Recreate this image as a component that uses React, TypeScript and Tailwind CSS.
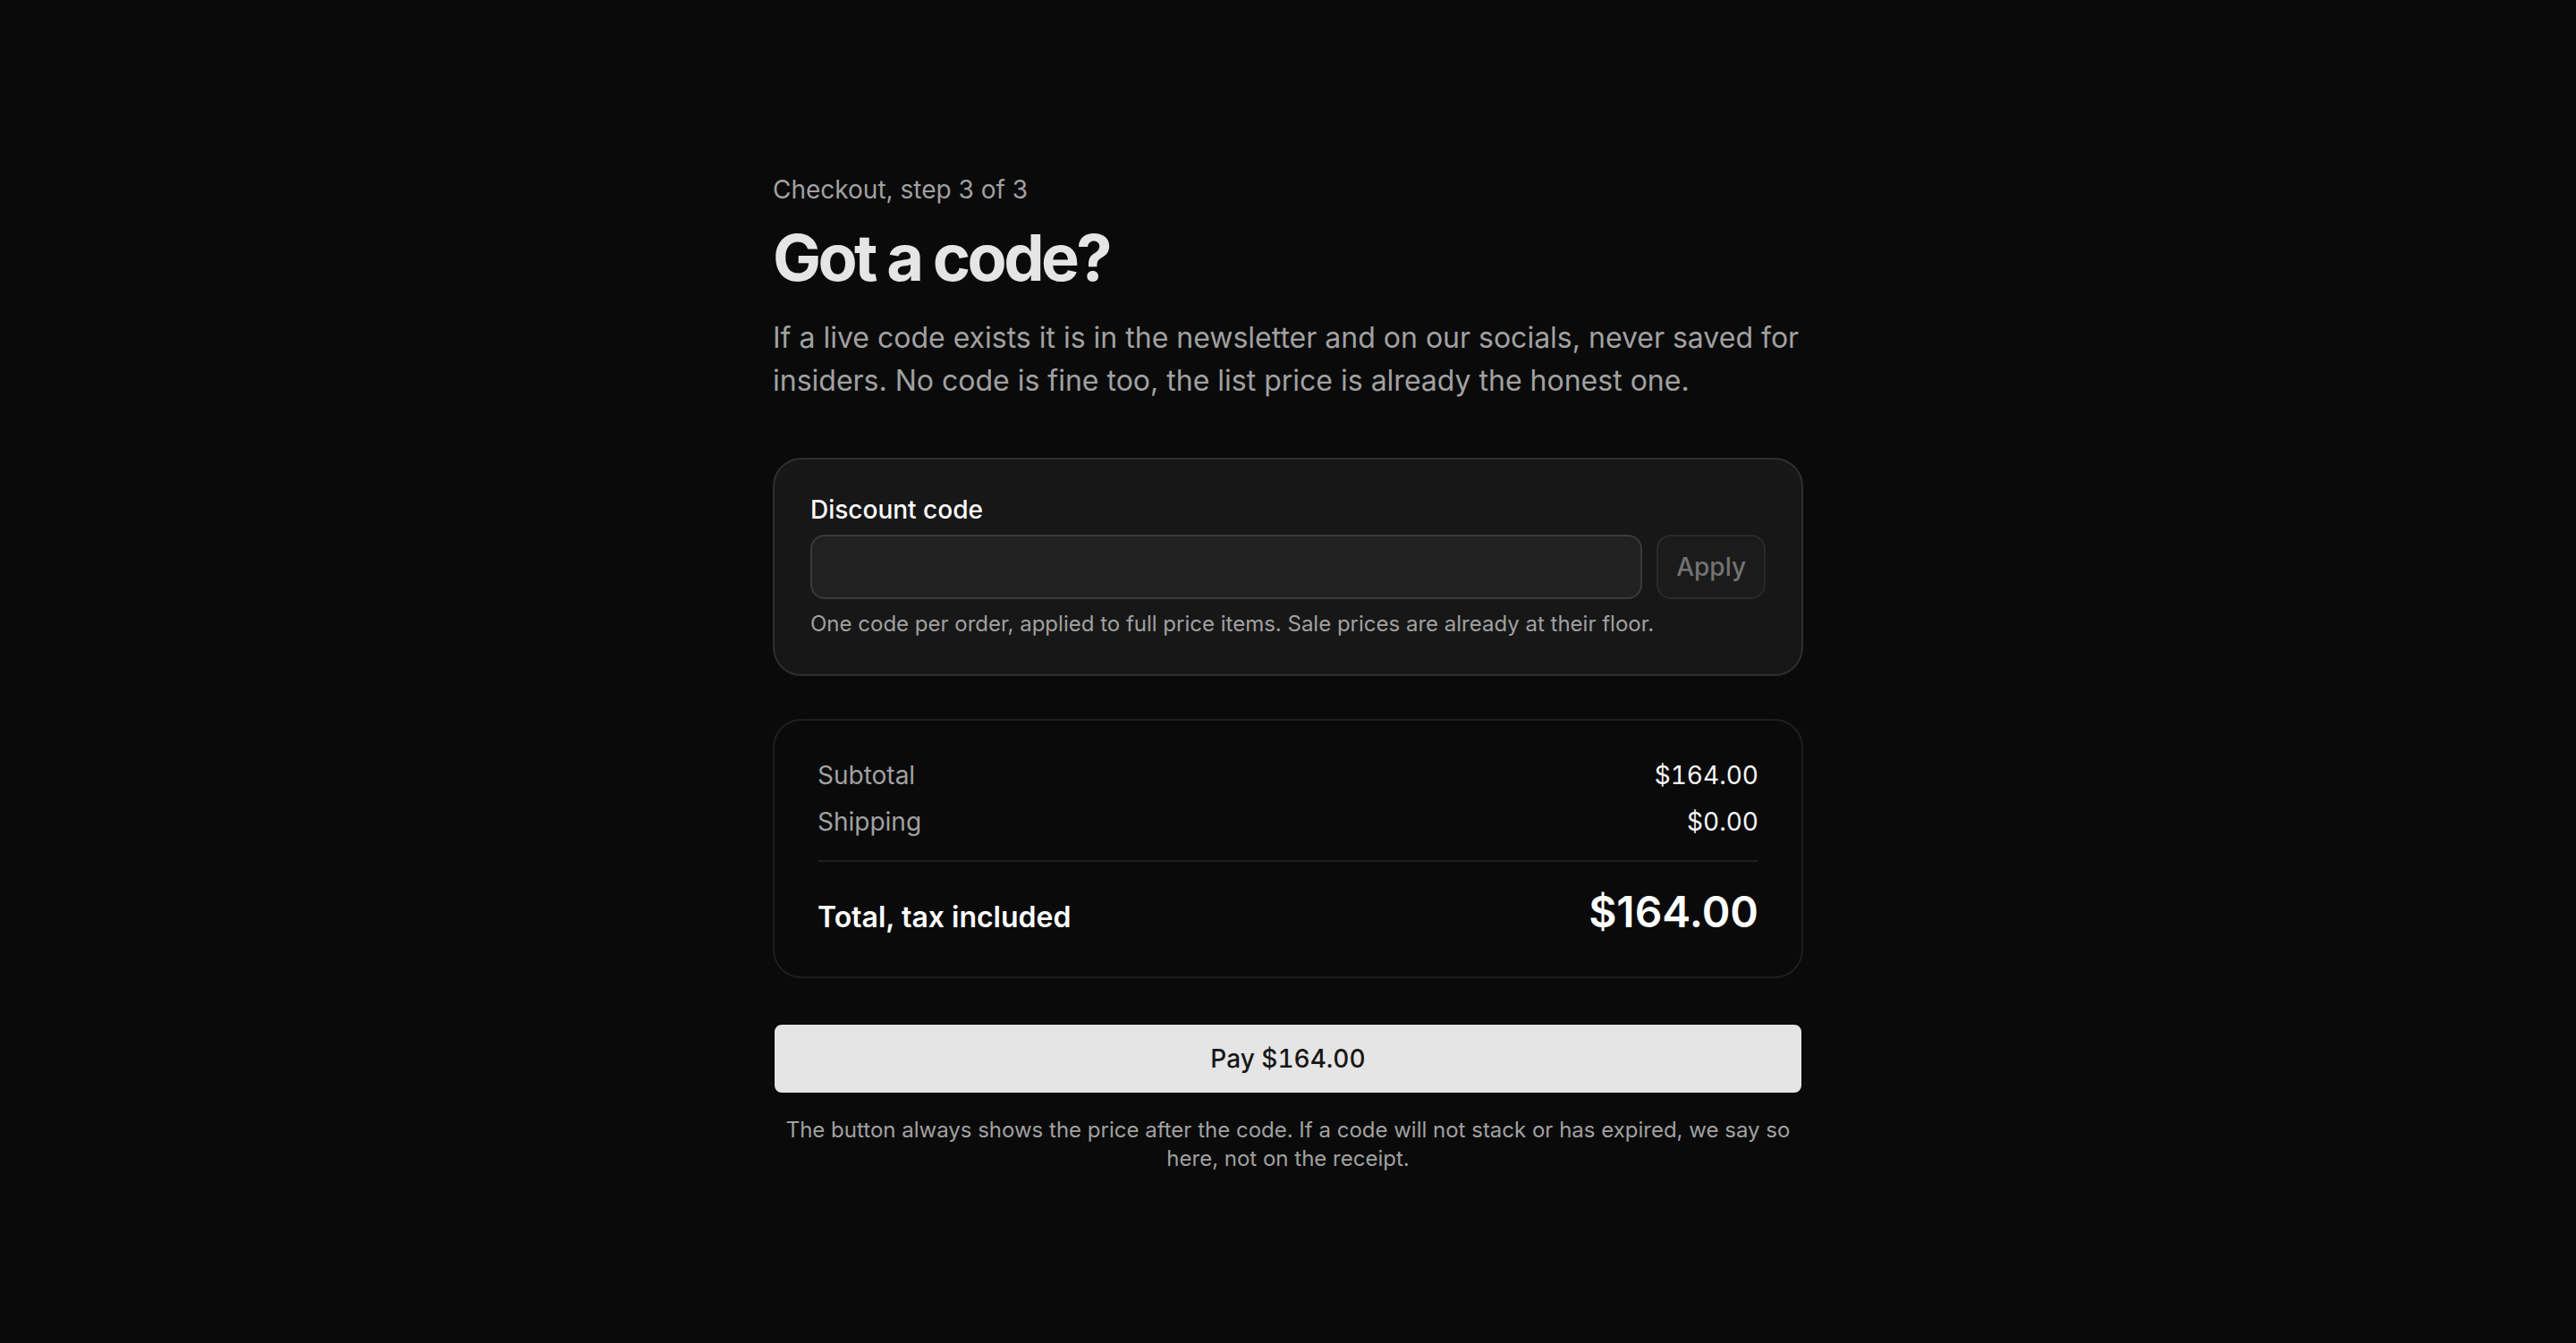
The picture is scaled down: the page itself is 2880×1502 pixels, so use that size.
import React, { useState } from 'react';

const App: React.FC = () => {
  const [code, setCode] = useState<string>('');
  const total = '$164.00';

  return (
    <div className="min-h-screen bg-[#0a0a0a] text-neutral-100 font-['Inter',sans-serif] antialiased">
      <div className="max-w-[1152px] mx-auto pt-[192px] pb-[128px]">
        <p className="text-[28px] leading-[40px] text-neutral-400">Checkout, step 3 of 3</p>
        <h1 className="mt-[16px] text-[72px] leading-[80px] font-bold tracking-[-0.05em] text-neutral-200">Got a code?</h1>
        <p className="mt-[26px] text-[32px] leading-[48px] text-neutral-400">
          If a live code exists it is in the newsletter and on our socials, never saved for insiders. No code is fine too, the list price is already the honest one.
        </p>

        <div className="mt-[62px] rounded-[32px] border-2 border-[#2e2e2e] bg-[#171717] p-[40px]">
          <label htmlFor="discount" className="block text-[28px] leading-[32px] font-medium text-white">Discount code</label>
          <div className="mt-[12px] flex gap-[16px]">
            <input
              id="discount"
              type="text"
              value={code}
              onChange={(e) => setCode(e.target.value)}
              className="h-[72px] flex-1 rounded-[16px] border-2 border-[#3a3a3a] bg-[#212121] px-[24px] text-[28px] text-neutral-100 outline-none"
            />
            <button className="h-[72px] rounded-[16px] border-2 border-[#2a2a2a] bg-[#1b1b1b] px-[20px] text-[28px] font-medium text-neutral-500">
              Apply
            </button>
          </div>
          <p className="mt-[12px] text-[24px] leading-[32px] text-neutral-400">
            One code per order, applied to full price items. Sale prices are already at their floor.
          </p>
        </div>

        <div className="mt-[48px] rounded-[32px] border-2 border-[#1e1e1e] px-[48px] pt-[41px] pb-[40px]">
          <div className="flex flex-col gap-[12px] text-[28px] leading-[40px]">
            <div className="flex justify-between">
              <span className="text-neutral-400">Subtotal</span>
              <span className="tabular-nums text-neutral-100">$164.00</span>
            </div>
            <div className="flex justify-between">
              <span className="text-neutral-400">Shipping</span>
              <span className="tabular-nums text-neutral-100">$0.00</span>
            </div>
          </div>
          <div className="mt-[23px] flex items-baseline justify-between border-t-2 border-[#1e1e1e] pt-[24px]">
            <span className="text-[32px] leading-[48px] font-semibold text-white">Total, tax included</span>
            <span className="text-[48px] leading-[64px] font-semibold text-white">{total}</span>
          </div>
        </div>

        <button className="mt-[50px] w-full rounded-[10px] border-2 border-[#0a0a0a] bg-neutral-200 py-[18px] text-[28px] leading-[40px] font-medium tabular-nums text-neutral-900">
          Pay {total}
        </button>
        <p className="mt-[24px] text-center text-[24px] leading-[32px] text-neutral-400">
          The button always shows the price after the code. If a code will not stack or has expired, we say so here, not on the receipt.
        </p>
      </div>
    </div>
  );
};

export default App;
